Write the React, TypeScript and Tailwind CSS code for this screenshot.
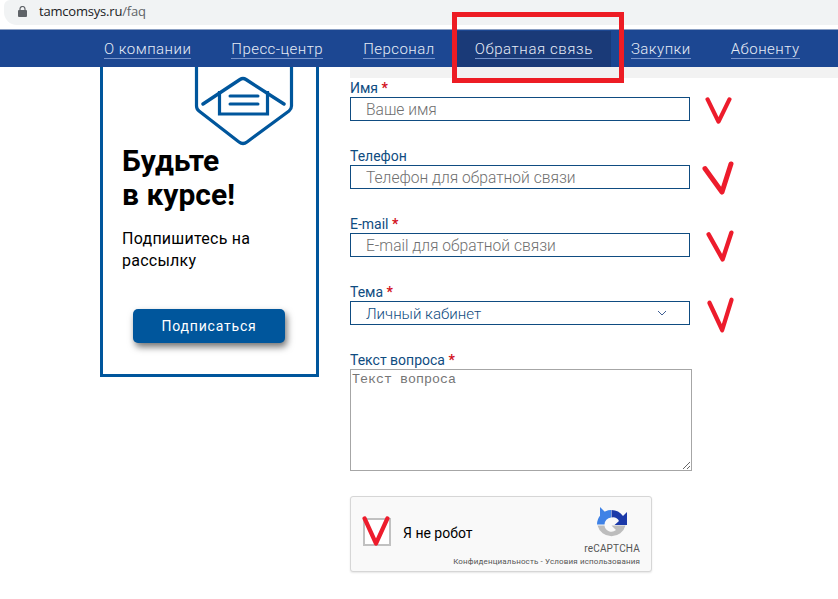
const navItems = [
  { label: "О компании" },
  { label: "Пресс-центр" },
  { label: "Персонал" },
  { label: "Обратная связь", active: true },
  { label: "Закупки" },
  { label: "Абоненту" },
];

function Label({ text, required }: { text: string; required?: boolean }) {
  return (
    <div className="h-[16px] text-[14px] leading-[14px] text-[#0f4c81] whitespace-nowrap">
      {text}
      {required && <span className="text-[#d2101c] font-bold"> *</span>}
    </div>
  );
}

function Field({ label, placeholder, required }: { label: string; placeholder: string; required?: boolean }) {
  return (
    <div className="h-[68px]">
      <Label text={label} required={required} />
      <input
        readOnly
        placeholder={placeholder}
        className="block w-[340px] h-[24px] border border-[#0f4c81] pl-[15px] pt-[2px] text-[15.6px] font-light placeholder:text-[#6f6f6f] outline-none"
      />
    </div>
  );
}

function Check({ className, d }: { className: string; d: string }) {
  return (
    <svg className={`absolute ${className}`} viewBox="0 0 32 36" fill="none" preserveAspectRatio="none">
      <path d={d} stroke="#ed1c2c" strokeWidth="5" strokeLinecap="round" strokeLinejoin="round" />
    </svg>
  );
}

export default function App() {
  return (
    <div className="relative w-[838px] h-[599px] overflow-hidden bg-white font-['Roboto',sans-serif]">
      {/* Address bar */}
      <div className="h-[25px] ml-[4px] bg-[#f1f3f4] rounded-bl-[13px] rounded-tl-[6px] flex items-center pl-[14px] pb-[3px]">
        <svg width="9" height="11" viewBox="0 0 9 11" className="text-[#5f6368]">
          <rect x="0" y="4" width="9" height="7" rx="1" fill="currentColor" />
          <path d="M2 4.5V3a2.5 2.5 0 0 1 5 0v1.5" fill="none" stroke="currentColor" strokeWidth="1.2" />
        </svg>
        <span className="ml-[12px] text-[13px] leading-[16px] text-[#202124] font-['Open_Sans',sans-serif] tracking-[-0.2px]">
          tamcomsys.ru<span className="text-[#5f6368]">/faq</span>
        </span>
      </div>

      {/* Nav */}
      <nav className="mt-[4px] h-[38px] bg-[#1c4792] border-t border-t-[#8ba0c4] flex items-end pl-[84px]">
        {navItems.map((item) => (
          <div
            key={item.label}
            className={`h-[36px] px-[20px] flex items-start pt-[9px] ${item.active ? "bg-[#1a3a78] pr-[18px]" : ""}`}
          >
            <span
              className={`text-[15px] leading-[18px] font-light text-[#e6ecf6] border-b border-b-[#7794cc] whitespace-nowrap ${
                item.active ? "tracking-[0.6px]" : "tracking-[0.47px]"
              }`}
            >
              {item.label}
            </span>
          </div>
        ))}
      </nav>

      {/* Main */}
      <div className="flex pl-[100px]">
        {/* Card */}
        <aside className="w-[219px] h-[310px] border-[3px] border-t-0 border-[#00569c] shrink-0">
          <svg width="100" height="79" viewBox="0 0 100 79" fill="none" className="ml-[91px]">
            <path
              d="M2.5 0V39Q2.5 42 5 44L45 75Q49 78 53 75L95 44Q97.5 42 97.5 39V0"
              stroke="#00569c"
              strokeWidth="3.2"
            />
            <path d="M9 37L46 12.5Q49 10.5 52 12.5L90 37" stroke="#00569c" strokeWidth="3.4" strokeLinecap="round" />
            <path d="M25.5 24V47H73.5V24" stroke="#00569c" strokeWidth="3.2" />
            <path d="M36 29H64M36 37H64" stroke="#00569c" strokeWidth="3" strokeLinecap="round" />
          </svg>
          <div className="pl-[19px]">
            <h2 className="text-[30px] leading-[34px] font-bold text-black -mt-[2px]">
              Будьте
              <br />в курсе!
            </h2>
            <p className="mt-[16px] text-[16px] leading-[22px] text-black tracking-[0.25px]">
              Подпишитесь на
              <br />
              рассылку
            </p>
          </div>
          <div className="mt-[37px] ml-[30px] w-[152px] h-[34px] rounded-[5px] bg-[#00569c] shadow-[2px_4px_7px_rgba(0,0,0,0.55)] flex items-center justify-center text-white text-[14px] tracking-[0.8px]">
            Подписаться
          </div>
        </aside>

        {/* Form area */}
        <div className="ml-[31px] flex-1">
          <div className="h-[11px] bg-[#f2f2f2]" />
          <div className="pt-[3px]">
            <Field label="Имя" placeholder="Ваше имя" required />
            <Field label="Телефон" placeholder="Телефон для обратной связи" />
            <Field label="E-mail" placeholder="E-mail для обратной связи" required />
            <div className="h-[68px]">
              <Label text="Тема" required />
              <div className="w-[340px] h-[24px] border border-[#0f4c81] pl-[15px] pr-[22px] pt-[3px] flex items-center justify-between text-[15.1px] font-light text-[#0f4c81]">
                <span>Личный кабинет</span>
                <svg width="10" height="6" viewBox="0 0 10 6" fill="none" className="-mt-[3px]">
                  <path d="M1 1L5 5L9 1" stroke="#3f5f94" strokeWidth="1" />
                </svg>
              </div>
            </div>
            <Label text="Текст вопроса" required />
            <textarea
              readOnly
              placeholder="Текст вопроса"
              className="block w-[342px] h-[102px] border border-[#a6a6a6] px-[1px] py-[2px] text-[13.33px] leading-[15px] font-['Liberation_Mono',monospace] placeholder:text-[#757575] outline-none"
            />

            {/* reCAPTCHA */}
            <div className="mt-[25px] w-[302px] h-[76px] rounded-[3px] border border-[#d6d6d6] bg-[#f9f9f9] shadow-[0_1px_2px_rgba(0,0,0,0.1)] flex">
              <div className="ml-[12px] mt-[21px] w-[28px] h-[28px] border-[2px] border-[#c1c1c1] bg-white shrink-0" />
              <div className="ml-[12px] mt-[28px] text-[14px] leading-[16px] text-black">Я не робот</div>
              <div className="ml-auto w-[190px] relative flex-1">
                <svg width="32" height="34" viewBox="0 0 32 34" fill="none" className="absolute right-[23px] top-[10px]">
                  <path d="M1 17.5A14.5 14.5 0 0 1 15 3V10.5A7 7 0 0 0 8.5 17.5Z" fill="#3f82e6" />
                  <path d="M4 0L14 10L4 14Z" fill="#3f82e6" />
                  <path d="M15.5 3A14.5 14.5 0 0 1 27 9L31 5V18H18.5L23 14A7 7 0 0 0 15.5 10.5Z" fill="#1c3aa9" />
                  <path d="M1.5 18.5H8.5A7 7 0 0 0 20 23L15.5 18.5H29.5A14.5 14.5 0 0 1 1.5 18.5Z" fill="#bdbdbd" />
                </svg>
                <div className="absolute right-[11px] top-[46px] text-[10px] leading-[12px] text-[#555] tracking-[0.2px]">
                  reCAPTCHA
                </div>
                <div className="absolute right-[11px] top-[60px] text-[8px] leading-[10px] text-[#555] whitespace-nowrap tracking-[0.15px]">
                  Конфиденциальность - Условия использования
                </div>
              </div>
            </div>
          </div>
        </div>
      </div>

      {/* Hand-drawn annotations */}
      <div className="absolute left-[452px] top-[12px] w-[172px] h-[71px] border-[5px] border-[#ed1c24]" />
      <Check className="left-[705px] top-[97px] w-[27px] h-[27px]" d="M3 3L16 33L29 3" />
      <Check className="left-[702px] top-[161px] w-[32px] h-[34px]" d="M3 8L20 33L29 3" />
      <Check className="left-[706px] top-[230px] w-[28px] h-[32px]" d="M3 5L19 33L29 3" />
      <Check className="left-[707px] top-[297px] w-[27px] h-[36px]" d="M3 6L18 33L29 3" />
      <Check className="left-[362px] top-[516px] w-[28px] h-[30px]" d="M3 3L16 33L29 3" />
    </div>
  );
}
